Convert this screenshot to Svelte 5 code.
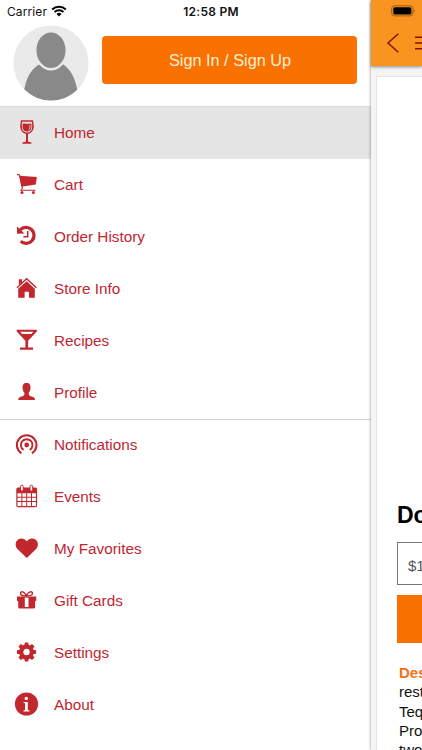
<script lang="ts">
  type Item = { id: string; label: string };

  const shopItems: Item[] = [
    { id: 'home', label: 'Home' },
    { id: 'cart', label: 'Cart' },
    { id: 'history', label: 'Order History' },
    { id: 'store', label: 'Store Info' },
    { id: 'recipes', label: 'Recipes' },
    { id: 'profile', label: 'Profile' },
  ];

  const otherItems: Item[] = [
    { id: 'notifications', label: 'Notifications' },
    { id: 'events', label: 'Events' },
    { id: 'favorites', label: 'My Favorites' },
    { id: 'gifts', label: 'Gift Cards' },
    { id: 'settings', label: 'Settings' },
    { id: 'about', label: 'About' },
  ];

  let active = $state('home');
</script>

{#snippet icon(id: string)}
  <svg class="icon" viewBox="0 0 26 26" aria-hidden="true">
    {#if id === 'home'}
      <path class="line" d="M7.6 .9 H18.4 C19.8 7 19.4 12.6 13 13.2 C6.6 12.6 6.2 7 7.6 .9 Z" stroke-width="1.5" />
      <path d="M8.8 3.7 C11 2.8 12.6 4.6 17.3 3.4 C18 8 17.2 11.1 13 11.5 C8.8 11.1 8 8 8.8 3.7 Z" />
      <path d="M12 13 H14 V21.4 L17.4 22.6 V23.7 H8.4 V22.6 L12 21.4 Z" />
      <path d="M15.8 5 C16.2 7.5 15.8 9 14.6 9.8" fill="none" stroke="#e5e5e5" stroke-width=".8" />
    {:else if id === 'cart'}
      <path class="line" d="M3 2.4 L5.4 3 L8.4 16.2 L7 18.3 H21.5" stroke-width="1.1" />
      <path d="M5.2 3.8 L22.9 5 L21.7 12.6 L7.5 14.8 Z" />
      <circle cx="8" cy="20.6" r="1.5" />
      <circle cx="19.4" cy="20.6" r="1.5" />
    {:else if id === 'history'}
      <path class="line" d="M6.2 5.9 A8 8 0 1 1 6.7 17.3" stroke-width="3.3" />
      <path d="M3 2.6 L10.4 9.5 L3 9.8 Z" />
      <path class="line" d="M13.7 7 V12.7 H9.4" stroke-width="1.5" />
    {:else if id === 'store'}
      <path d="M4.9 3.2 H8 V6.4 L4.9 9.2 Z" />
      <path class="line" d="M3 11.8 L12.6 2.7 L22.4 11.8" stroke-width="1.4" />
      <path d="M12.6 5.2 L20.8 12.7 V21.8 H15 V15.7 H10.6 V21.8 H4.2 V12.7 Z" />
    {:else if id === 'recipes'}
      <path fill-rule="evenodd" d="M2.7 1.7 H22.8 V3.5 L14.1 12.7 V19.5 H19 V21.7 H6 V19.5 H11.4 V12.7 L2.7 3.5 Z M6.1 3.7 L8.2 6 H17.3 L19.4 3.7 Z" />
    {:else if id === 'profile'}
      <path d="M12.6 3 C15.8 3 16.8 5 16.5 8.2 C16.3 10.6 15.3 12 14.7 13 C14.7 15.2 15.2 15.7 17.5 16.4 C20 17.1 21 17.8 21 20 H4.2 C4.2 17.8 5.2 17.1 7.7 16.4 C10 15.7 10.5 15.2 10.5 13 C9.7 12 8.8 10.6 8.6 8.2 C8.3 5 9.4 3 12.6 3 Z" />
    {:else if id === 'notifications'}
      <circle cx="12.7" cy="12" r="2.4" />
      <path class="line" d="M9.6 16.9 A5.8 5.8 0 1 1 15.8 16.9" stroke-width="1.9" />
      <path class="line" d="M7.4 20.3 A9.8 9.8 0 1 1 18 20.3" stroke-width="2.1" />
    {:else if id === 'events'}
      <path fill-rule="evenodd" d="M4 2.6 H21.4 Q23.1 2.6 23.1 4.3 V20.6 Q23.1 22.3 21.4 22.3 H4 Q2.3 22.3 2.3 20.6 V4.3 Q2.3 2.6 4 2.6 Z M3.5 8.2 V11.7 H7.4 V8.2 Z M8.4 8.2 V11.7 H12.2 V8.2 Z M13.2 8.2 V11.7 H17 V8.2 Z M18 8.2 V11.7 H21.9 V8.2 Z M3.5 12.7 V16.1 H7.4 V12.7 Z M8.4 12.7 V16.1 H12.2 V12.7 Z M13.2 12.7 V16.1 H17 V12.7 Z M18 12.7 V16.1 H21.9 V12.7 Z M3.5 17.1 V21 H7.4 V17.1 Z M8.4 17.1 V21 H12.2 V17.1 Z M13.2 17.1 V21 H17 V17.1 Z M18 17.1 V21 H21.9 V17.1 Z" />
      <rect class="ring" x="6.5" y=".2" width="2.7" height="5.8" rx="1.3" />
      <rect class="ring" x="16" y=".2" width="2.7" height="5.8" rx="1.3" />
    {:else if id === 'favorites'}
      <path d="M12.8 21 L3.7 12.2 C.7 9 1.2 4.6 4.1 2.5 C7 .5 10.8 1.4 12.8 4.3 C14.8 1.4 18.6 .5 21.5 2.5 C24.4 4.6 24.9 9 21.9 12.2 Z" />
    {:else if id === 'gifts'}
      <path class="line" d="M12.3 7 C10.4 1.6 6.5 2.1 6.6 4.5 C6.7 6.4 9 7 12.3 7 C15.9 7 18.4 6.4 18.5 4.5 C18.6 2.1 14.4 1.6 12.3 7 Z" stroke-width="1.4" />
      <path fill-rule="evenodd" d="M3 7.4 H22.2 V12 H21.1 V18.3 Q21.1 19.4 20 19.4 H5.3 Q4.2 19.4 4.2 18.3 V12 H3 Z M10.8 8.5 V18 H14.5 V8.5 Z" />
    {:else if id === 'settings'}
      <circle class="line" cx="12.5" cy="11" r="5.3" stroke-width="4.2" />
      {#each [0, 45, 90, 135, 180, 225, 270, 315] as angle}
        <path d="M10.3 4.8 L10.8 1.4 H14.2 L14.7 4.8 Z" transform="rotate({angle} 12.5 11)" />
      {/each}
    {:else if id === 'about'}
      <circle cx="12.5" cy="11" r="11.6" />
      <circle class="knock" cx="12.3" cy="5.4" r="1.7" />
      <path class="knock" d="M9.6 8.9 H13.8 V17 L15.5 17.4 V18.4 H9.4 V17.4 L11.1 17 V10.3 L9.6 9.9 Z" />
    {/if}
  </svg>
{/snippet}

{#snippet row(item: Item)}
  <li>
    <button class="row" class:active={active === item.id} onclick={() => (active = item.id)}>
      {@render icon(item.id)}
      <span>{item.label}</span>
    </button>
  </li>
{/snippet}

<div class="screen">
  <div class="status">
    <div class="carrier">
      <span>Carrier</span>
      <svg width="16" height="12" viewBox="0 0 16 12" aria-hidden="true">
        <path d="M1.2 4.5 A9.8 9.8 0 0 1 14.8 4.5" />
        <path d="M3.6 7 A6.3 6.3 0 0 1 12.4 7" />
        <path class="dot" d="M8 11.5 L5.5 9 A3.6 3.6 0 0 1 10.5 9 Z" />
      </svg>
    </div>
    <span class="time">12:58 PM</span>
    <svg class="battery" width="26" height="12" viewBox="0 0 26 12" aria-hidden="true">
      <rect class="shell" x=".7" y=".8" width="21.3" height="10.1" rx="2.8" />
      <rect x="2.3" y="2.3" width="18.1" height="7.1" rx="1.5" />
      <path class="cap" d="M23.3 4.1 Q25.1 5.8 23.3 7.6 Z" />
    </svg>
  </div>

  <nav class="drawer">
    <header class="account">
      <svg class="avatar" viewBox="0 0 76 76" aria-hidden="true">
        <clipPath id="disc"><circle cx="38" cy="38" r="37.6" /></clipPath>
        <g clip-path="url(#disc)">
          <rect width="76" height="76" fill="#eaeaea" />
          <path d="M26 39.5 C17 45 13 54 11 66 V76 H65 L64.5 66 C62 53 58 45 50.5 39.5 Z" fill="#898989" />
          <ellipse cx="38" cy="25.4" rx="16.7" ry="20.1" fill="#eaeaea" />
          <ellipse cx="38" cy="25.2" rx="14.5" ry="17.8" fill="#898989" />
        </g>
      </svg>
      <button class="sign-in">Sign In / Sign Up</button>
    </header>
    <ul>
      {#each shopItems as item (item.id)}
        {@render row(item)}
      {/each}
    </ul>
    <ul class="secondary">
      {#each otherItems as item (item.id)}
        {@render row(item)}
      {/each}
    </ul>
  </nav>

  <main class="page">
    <div class="toolbar">
      <svg width="51" height="24" viewBox="0 0 51 24" aria-hidden="true">
        <path d="M27.3 2.8 L17 12 L27.3 21.2" />
        <path d="M44 6.2 H60 M44 12 H60 M44 17.7 H60" />
      </svg>
    </div>
    <div class="card">
      <h1>Don</h1>
      <div class="price">$19.99</div>
      <div class="add"></div>
      <div class="description">
        <strong>Description</strong>
        <span>rested</span>
        <span>Tequila</span>
        <span>Produced</span>
        <span>two</span>
      </div>
    </div>
  </main>
</div>

<style>
  :global(body) {
    margin: 0;
    overflow: hidden;
  }

  .screen {
    position: relative;
    display: flex;
    width: 422px;
    height: 750px;
    overflow: hidden;
    background: #fff;
    font-family: 'Liberation Sans', Arial, sans-serif;
  }

  .status {
    position: absolute;
    inset: 0 0 auto;
    z-index: 2;
    display: grid;
    grid-template-columns: 1fr auto 1fr;
    align-items: center;
    height: 22px;
    padding: 0 5px 0 7px;
    font: 12px Inter, sans-serif;
    letter-spacing: 0.1px;
    color: #111;
  }

  .carrier {
    display: flex;
    align-items: center;
    gap: 4px;
  }

  .carrier path {
    fill: none;
    stroke: #000;
    stroke-width: 2.1;
  }

  .carrier .dot {
    fill: #000;
    stroke: none;
  }

  .time {
    margin-right: 2px;
    font-weight: 600;
    letter-spacing: 0.25px;
  }

  .battery {
    justify-self: end;
  }

  .battery .shell {
    fill: none;
    stroke: #9b5a14;
  }

  .battery .cap {
    fill: #9b5a14;
  }

  .drawer {
    flex: 0 0 371px;
    background: #fff;
  }

  .account {
    display: flex;
    box-sizing: border-box;
    height: 107px;
    padding: 25px 14px 0 13px;
    border-bottom: 1px solid #dcdcdc;
  }

  .avatar {
    width: 76px;
    height: 76px;
  }

  .sign-in {
    flex: 1;
    height: 48px;
    margin: 11px 0 0 13px;
    padding: 0 0 0 1px;
    border: 0;
    border-radius: 4px;
    background: #f97100;
    color: #fff0d4;
    font: 16.3px 'Liberation Sans', Arial, sans-serif;
  }

  ul {
    margin: 0;
    padding: 0;
    list-style: none;
  }

  .secondary {
    border-top: 1px solid #d0d0d0;
  }

  .row {
    display: flex;
    align-items: center;
    gap: 14px;
    width: 100%;
    height: 52px;
    padding: 0 14px;
    border: 0;
    background: none;
    color: #bf2730;
    font: 15.3px 'Liberation Sans', Arial, sans-serif;
    text-align: left;
  }

  .row.active {
    background: #e5e5e5;
  }

  .secondary span {
    margin-bottom: 2px;
  }

  .icon {
    width: 26px;
    height: 26px;
    overflow: visible;
    fill: #c1272d;
  }

  .icon .line {
    fill: none;
    stroke: #c1272d;
  }

  .icon .knock {
    fill: #fff;
  }

  .icon .ring {
    fill: #fff;
    stroke: #c1272d;
    stroke-width: 1;
  }

  .page {
    display: flex;
    flex-direction: column;
    flex: 1;
    min-width: 0;
    background: #f4f4f4;
    box-shadow: 0 0 3px rgba(0, 0, 0, 0.45);
    z-index: 1;
  }

  .toolbar {
    box-sizing: border-box;
    height: 66px;
    padding-top: 31px;
    background: #f99420;
    box-shadow: 0 1px 3px rgba(0, 0, 0, 0.45);
  }

  .toolbar svg {
    display: block;
    fill: none;
    stroke: #861200;
    stroke-width: 1.5;
  }

  .card {
    flex: 1;
    box-sizing: border-box;
    margin: 10px 0 0 5px;
    padding: 425px 0 0 20px;
    border: solid #e4e4e4;
    border-width: 1px 0 0 1px;
    background: #fff;
    white-space: nowrap;
    overflow: hidden;
  }

  h1 {
    margin: 0;
    font-size: 23px;
    line-height: 26px;
    color: #000;
  }

  .price {
    box-sizing: border-box;
    width: 200px;
    height: 43px;
    margin-top: 14px;
    padding-left: 10px;
    border: 1px solid #777;
    font-size: 15px;
    line-height: 45px;
    color: #555;
  }

  .add {
    height: 48px;
    margin-top: 10px;
    background: #f97100;
  }

  .description {
    display: flex;
    flex-direction: column;
    margin: 20px 0 0 2px;
    font-size: 15px;
    line-height: 19.3px;
    color: #111;
  }

  .description strong {
    color: #f47216;
  }
</style>
